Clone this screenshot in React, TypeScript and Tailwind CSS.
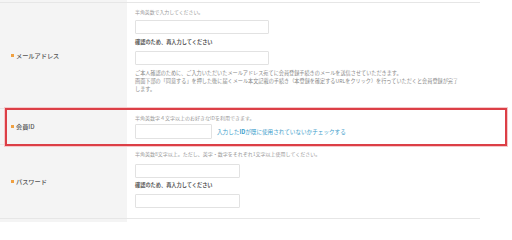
import React from "react";

const font = "font-['Noto_Sans_CJK_JP','Noto_Sans_CJK_SC',sans-serif]";

function Label({ text }: { text: string }) {
  return (
    <div className="w-[127px] shrink-0 bg-[#f4f4f4] flex items-center pl-[11px]">
      <span className="w-[3px] h-[3px] bg-[#f0a040] mr-[2px]" />
      <span className="text-[6.2px] leading-[8px] text-[#555] font-medium">{text}</span>
    </div>
  );
}

function Input({ w, h = "h-[14px]" }: { w: string; h?: string }) {
  return <div className={`${w} ${h} border border-[#e2e2e2] bg-white rounded-[1px]`} />;
}

export default function App() {
  return (
    <div className={`w-[512px] h-[222px] bg-white overflow-hidden ${font}`}>
      <div className="w-[480px] flex flex-col">
        {/* previous row tail */}
        <div className="flex h-[2px]">
          <div className="w-[127px] bg-[#f4f4f4]" />
          <div className="flex-1 bg-white" />
        </div>

        {/* email row */}
        <div className="flex border-t border-[#e6e6e6]">
          <Label text="メールアドレス" />
          <div className="flex-1 pl-[8px] pt-[5px] pb-[15px] flex flex-col">
            <div className="text-[4.9px] leading-[8px] text-[#999]">半角英数で入力してください。</div>
            <div className="mt-[4px]">
              <Input w="w-[134px]" />
            </div>
            <div className="mt-[4px] text-[5.2px] leading-[8px] text-[#555] font-bold">確認のため、再入力してください</div>
            <div className="mt-[5px]">
              <Input w="w-[134px]" />
            </div>
            <div className="mt-[4px] text-[5.15px] leading-[8px] text-[#888] whitespace-nowrap">
              <div>ご本人確認のために、ご入力いただいたメールアドレス宛てに会員登録手続きのメールを送信させていただきます。</div>
              <div>画面下部の「同意する」を押した後に届くメール本文記載の手続き（本登録を確定するURLをクリック）を行っていただくと会員登録が完了</div>
              <div>します。</div>
            </div>
          </div>
        </div>

        {/* member id row */}
        <div className="relative border-t border-b border-[#e6e6e6]">
          <div className="flex">
            <Label text="会員ID" />
            <div className="flex-1 pl-[8px] pt-[5px] pb-[5px] flex flex-col bg-white">
              <div className="text-[5px] leading-[8px] text-[#999]">半角英数字４文字以上のお好きなIDを利用できます。</div>
              <div className="mt-[2px] flex items-center">
                <Input w="w-[77px]" h="h-[15px]" />
                <span className="ml-[5px] text-[5.6px] leading-[8px] text-[#3c9dcb] whitespace-nowrap">
                  入力した<span className="font-bold">ID</span>が既に使用されていないかチェックする
                </span>
              </div>
            </div>
          </div>
          <div className="absolute left-[5px] -top-[1px] w-[502px] h-[38px] border-2 border-[#dc3f46] shadow-[0_0_0_1px_#f6c8ca] pointer-events-none" />
        </div>

        {/* password row */}
        <div className="flex border-b border-[#e6e6e6]">
          <Label text="パスワード" />
          <div className="flex-1 pl-[8px] pt-[5px] pb-[10px] flex flex-col">
            <div className="text-[5px] leading-[8px] text-[#999] whitespace-nowrap">半角英数8文字以上。ただし、英字・数字をそれぞれ1文字以上使用してください。</div>
            <div className="mt-[6px]">
              <Input w="w-[105px]" />
            </div>
            <div className="mt-[3px] text-[5.2px] leading-[8px] text-[#555] font-bold">確認のため、再入力してください</div>
            <div className="mt-[5px]">
              <Input w="w-[105px]" />
            </div>
          </div>
        </div>

        <div className="flex h-[4px]">
          <div className="w-[127px] bg-[#f4f4f4]" />
          <div className="flex-1 bg-white" />
        </div>
      </div>
    </div>
  );
}
